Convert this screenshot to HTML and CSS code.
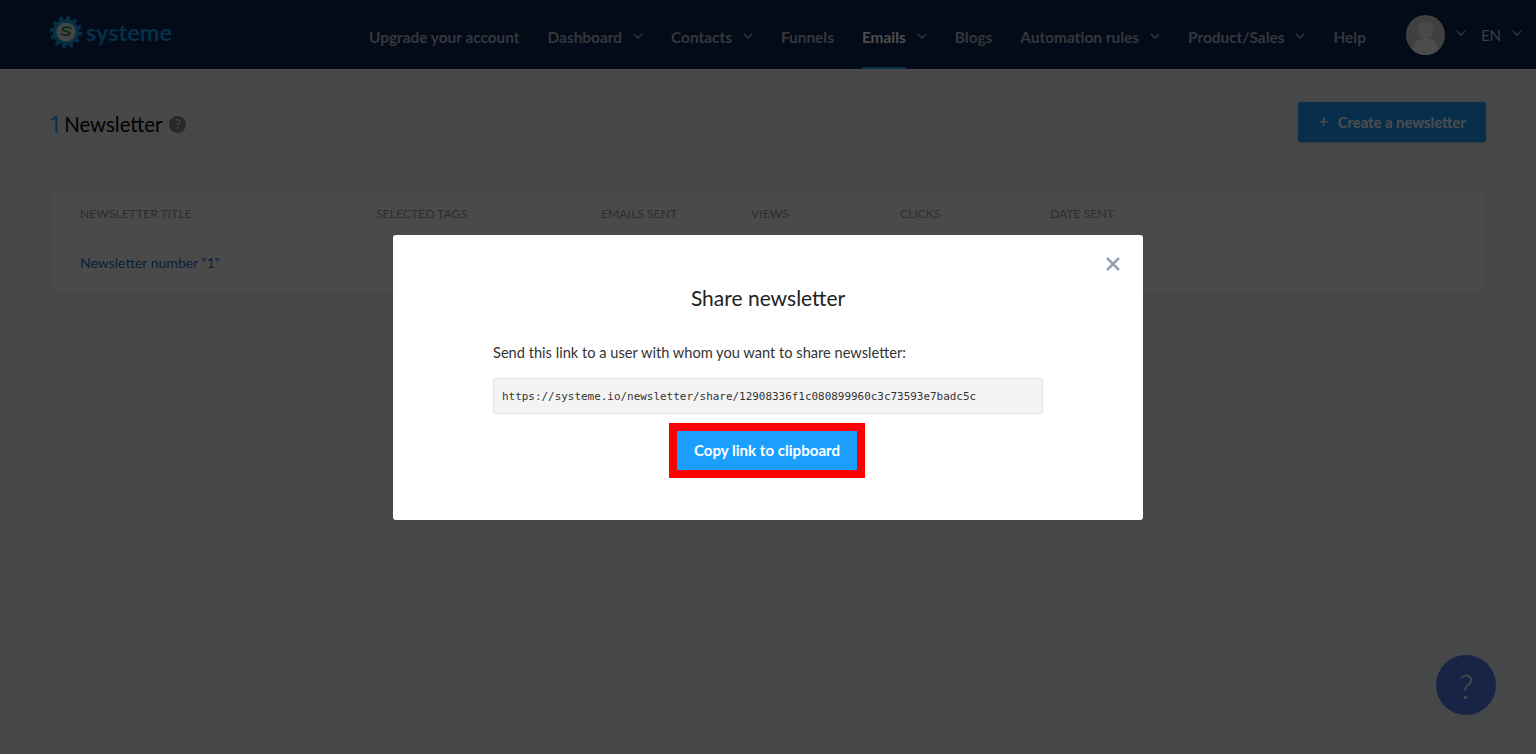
FILE: index.html
```html
<!DOCTYPE html>
<html lang="en">
<head>
    <meta charset="UTF-8">
    <meta name="viewport" content="width=device-width, initial-scale=1.0">
    <title>Newsletters</title>
    <link rel="stylesheet" href="styles.css">
</head>
<body>
    <header class="topbar">
        <a class="logo" href="#">
            <svg class="logo-gear" width="32" height="32" viewBox="0 0 32 32">
                <circle cx="16" cy="16" r="13" fill="#1a9fe0"/>
                <circle cx="16" cy="16" r="14" fill="none" stroke="#1a9fe0" stroke-width="4" stroke-dasharray="3.7 3.63"/>
                <circle cx="16" cy="16" r="9.500" fill="#e6e6e6"/>
                <path d="M21 12.500c-2.500-2-8-1.500-8.500 1 .5 2 7 1.500 7.500 3.500-.5 2.500-6 3-8.500 1" fill="none" stroke="#2e9e4f" stroke-width="2" stroke-linecap="round"/>
            </svg>
            <span class="logo-text">systeme</span>
        </a>
        <nav class="main-nav">
            <a href="#"><span class="nav-label">Upgrade your account</span></a>
            <a href="#"><span class="nav-label">Dashboard</span><svg class="chev" viewBox="0 0 10 6"><path d="M1 1l4 4 4-4"/></svg></a>
            <a href="#"><span class="nav-label">Contacts</span><svg class="chev" viewBox="0 0 10 6"><path d="M1 1l4 4 4-4"/></svg></a>
            <a href="#"><span class="nav-label">Funnels</span></a>
            <a href="#" class="active"><span class="nav-label">Emails</span><svg class="chev" viewBox="0 0 10 6"><path d="M1 1l4 4 4-4"/></svg></a>
            <a href="#"><span class="nav-label">Blogs</span></a>
            <a href="#"><span class="nav-label">Automation rules</span><svg class="chev" viewBox="0 0 10 6"><path d="M1 1l4 4 4-4"/></svg></a>
            <a href="#"><span class="nav-label">Product/Sales</span><svg class="chev" viewBox="0 0 10 6"><path d="M1 1l4 4 4-4"/></svg></a>
            <a href="#"><span class="nav-label">Help</span></a>
        </nav>
        <div class="account">
            <svg class="avatar" width="39" height="40" viewBox="0 0 39 40">
                <defs><clipPath id="avatar-clip"><ellipse cx="19.500" cy="20" rx="19.500" ry="20"/></clipPath></defs>
                <g clip-path="url(#avatar-clip)">
                    <rect width="39" height="40" fill="#d8d8d8"/>
                    <circle cx="19.500" cy="15" r="8" fill="#f4f4f4"/>
                    <ellipse cx="19.500" cy="37" rx="13" ry="14" fill="#fff"/>
                </g>
            </svg>
            <svg class="chev" viewBox="0 0 10 6"><path d="M1 1l4 4 4-4"/></svg>
            <span class="lang">EN</span>
            <svg class="chev" viewBox="0 0 10 6"><path d="M1 1l4 4 4-4"/></svg>
        </div>
    </header>

    <main class="content">
        <div class="page-head">
            <h1 class="page-title"><span class="count">1</span><span>Newsletter</span><span class="help-dot">?</span></h1>
            <button class="create-btn"><span class="plus">+</span>Create a newsletter</button>
        </div>

        <div class="table-card">
            <div class="table-row table-head">
                <span>Newsletter title</span>
                <span>Selected tags</span>
                <span>Emails sent</span>
                <span>Views</span>
                <span>Clicks</span>
                <span>Date sent</span>
            </div>
            <div class="table-row table-body">
                <a href="#">Newsletter number "1"</a>
            </div>
        </div>
    </main>

    <button class="support-btn">?</button>

    <div class="overlay">
        <div class="modal">
            <svg class="modal-close" width="14" height="14" viewBox="0 0 14 14"><path d="M1 1l12 12M13 1L1 13"/></svg>
            <h2 class="modal-title">Share newsletter</h2>
            <p class="modal-text">Send this link to a user with whom you want to share newsletter:</p>
            <div class="share-link">https://systeme.io/newsletter/share/12908336f1c080899960c3c73593e7badc5c</div>
            <div class="copy-wrap">
                <button class="copy-btn">Copy link to clipboard</button>
            </div>
        </div>
    </div>
</body>
</html>
```

FILE: styles.css
```css
* {
    box-sizing: border-box;
}
body {
    font-family: 'Lato', 'Liberation Sans', sans-serif;
    margin: 0;
    height: 754px;
    overflow: hidden;
    background-color: #eceef2;
    color: #333;
}
a {
    text-decoration: none;
}
button {
    font-family: inherit;
    border: none;
}
.topbar {
    height: 69px;
    background-color: #0b2253;
    display: flex;
    align-items: center;
    padding: 0 14px 0 50px;
}
.logo {
    display: flex;
    align-items: center;
    gap: 4px;
    margin-top: -5px;
}
.logo-text {
    font-size: 23.5px;
    font-weight: 700;
    color: #12a0e8;
    margin-top: -1px;
}
.main-nav {
    display: flex;
    gap: 28px;
    margin-left: auto;
    height: 69px;
    padding-top: 5px;
}
.main-nav a {
    color: #aeb6c2;
    font-size: 15.4px;
    font-weight: 700;
    display: flex;
    align-items: center;
    gap: 11px;
}
.nav-label {
    height: 100%;
    display: flex;
    align-items: center;
    padding-top: 1px;
    border-bottom: 2px solid transparent;
}
.main-nav a.active {
    color: #fff;
}
.main-nav a.active .nav-label {
    border-bottom-color: #1a9fff;
}
.chev {
    width: 10px;
    height: 6px;
    margin-top: -2px;
    fill: none;
    stroke: #aeb6c2;
    stroke-width: 1.4;
}
.account {
    display: flex;
    align-items: center;
    margin-left: 40px;
    gap: 11px;
}
.account .chev {
    margin-top: -3px;
}
.lang {
    color: #c2cbdc;
    font-size: 15px;
    margin-left: 4px;
}
.content {
    padding: 0 50px;
}
.page-head {
    display: flex;
    justify-content: space-between;
    align-items: center;
    padding-top: 33px;
}
.page-title {
    margin: 4px 0 0;
    font-size: 20.4px;
    font-weight: 400;
    color: #000;
    display: flex;
    align-items: center;
}
.count {
    font-family: 'Open Sans', sans-serif;
    color: #1a9fff;
    font-size: 23px;
    margin-left: -1px;
    margin-right: 2px;
}
.help-dot {
    width: 17px;
    height: 17px;
    margin-left: 7px;
    border-radius: 50%;
    background-color: #8a8a8a;
    color: #ddd;
    font-size: 13px;
    font-weight: 700;
    text-align: center;
    line-height: 17px;
}
.create-btn {
    width: 188px;
    height: 40px;
    padding-bottom: 3px;
    background-color: #1a9fff;
    color: #fff;
    font-size: 14.8px;
    font-weight: 700;
    border-radius: 3px;
    box-shadow: 0 1px 2px rgba(0, 0, 0, 0.2);
}
.plus {
    font-size: 18px;
    font-weight: 400;
    margin-right: 9px;
}
.table-card {
    margin-top: 51px;
    height: 98px;
    background-color: #f8f8f8;
    border-radius: 4px;
    box-shadow: 0 0 3px rgba(0, 0, 0, 0.05);
}
.table-row {
    display: grid;
    grid-template-columns: 296px 225px 150px 149px 150px 1fr;
    padding: 0 30px;
    align-items: center;
}
.table-head {
    height: 41px;
    font-size: 12.2px;
    text-transform: uppercase;
    color: #999;
}
.table-body {
    height: 57px;
    font-size: 14px;
}
.table-body a {
    color: #1a6fc9;
    grid-column: 1 / 3;
}
.support-btn {
    position: fixed;
    right: 40px;
    bottom: 39px;
    width: 60px;
    height: 60px;
    border-radius: 50%;
    background-color: #4f7ae6;
    color: #fff;
    font-size: 34px;
    font-weight: 300;
}
.overlay {
    position: fixed;
    inset: 0;
    background-color: rgba(0, 0, 0, 0.7);
    display: flex;
    align-items: center;
    justify-content: center;
}
.modal {
    position: relative;
    width: 750px;
    height: 285px;
    background-color: #fff;
    border-radius: 3px;
    padding: 51px 100px 0;
}
.modal-close {
    position: absolute;
    top: 22px;
    right: 23px;
    fill: none;
    stroke: #8fa3b5;
    stroke-width: 2.5;
}
.modal-title {
    margin: 0;
    text-align: center;
    font-size: 21px;
    font-weight: 400;
    color: #222;
    line-height: 24px;
}
.modal-text {
    margin: 33px 0 0;
    font-size: 14.63px;
    line-height: 20px;
    color: #333;
}
.share-link {
    margin-top: 15px;
    height: 36px;
    padding: 0 8px;
    background-color: #f4f4f4;
    border: 1px solid #e4e4e4;
    border-radius: 3px;
    font-family: 'DejaVu Sans Mono', monospace;
    font-size: 10.95px;
    line-height: 36px;
    color: #333;
}
.copy-wrap {
    margin-top: 9px;
    text-align: center;
}
.copy-btn {
    width: 196px;
    height: 55px;
    margin-right: 2px;
    padding-bottom: 1px;
    background-color: #1a9fff;
    border: 8px solid #f00;
    color: #fff;
    font-size: 15.1px;
    font-weight: 700;
}
```
